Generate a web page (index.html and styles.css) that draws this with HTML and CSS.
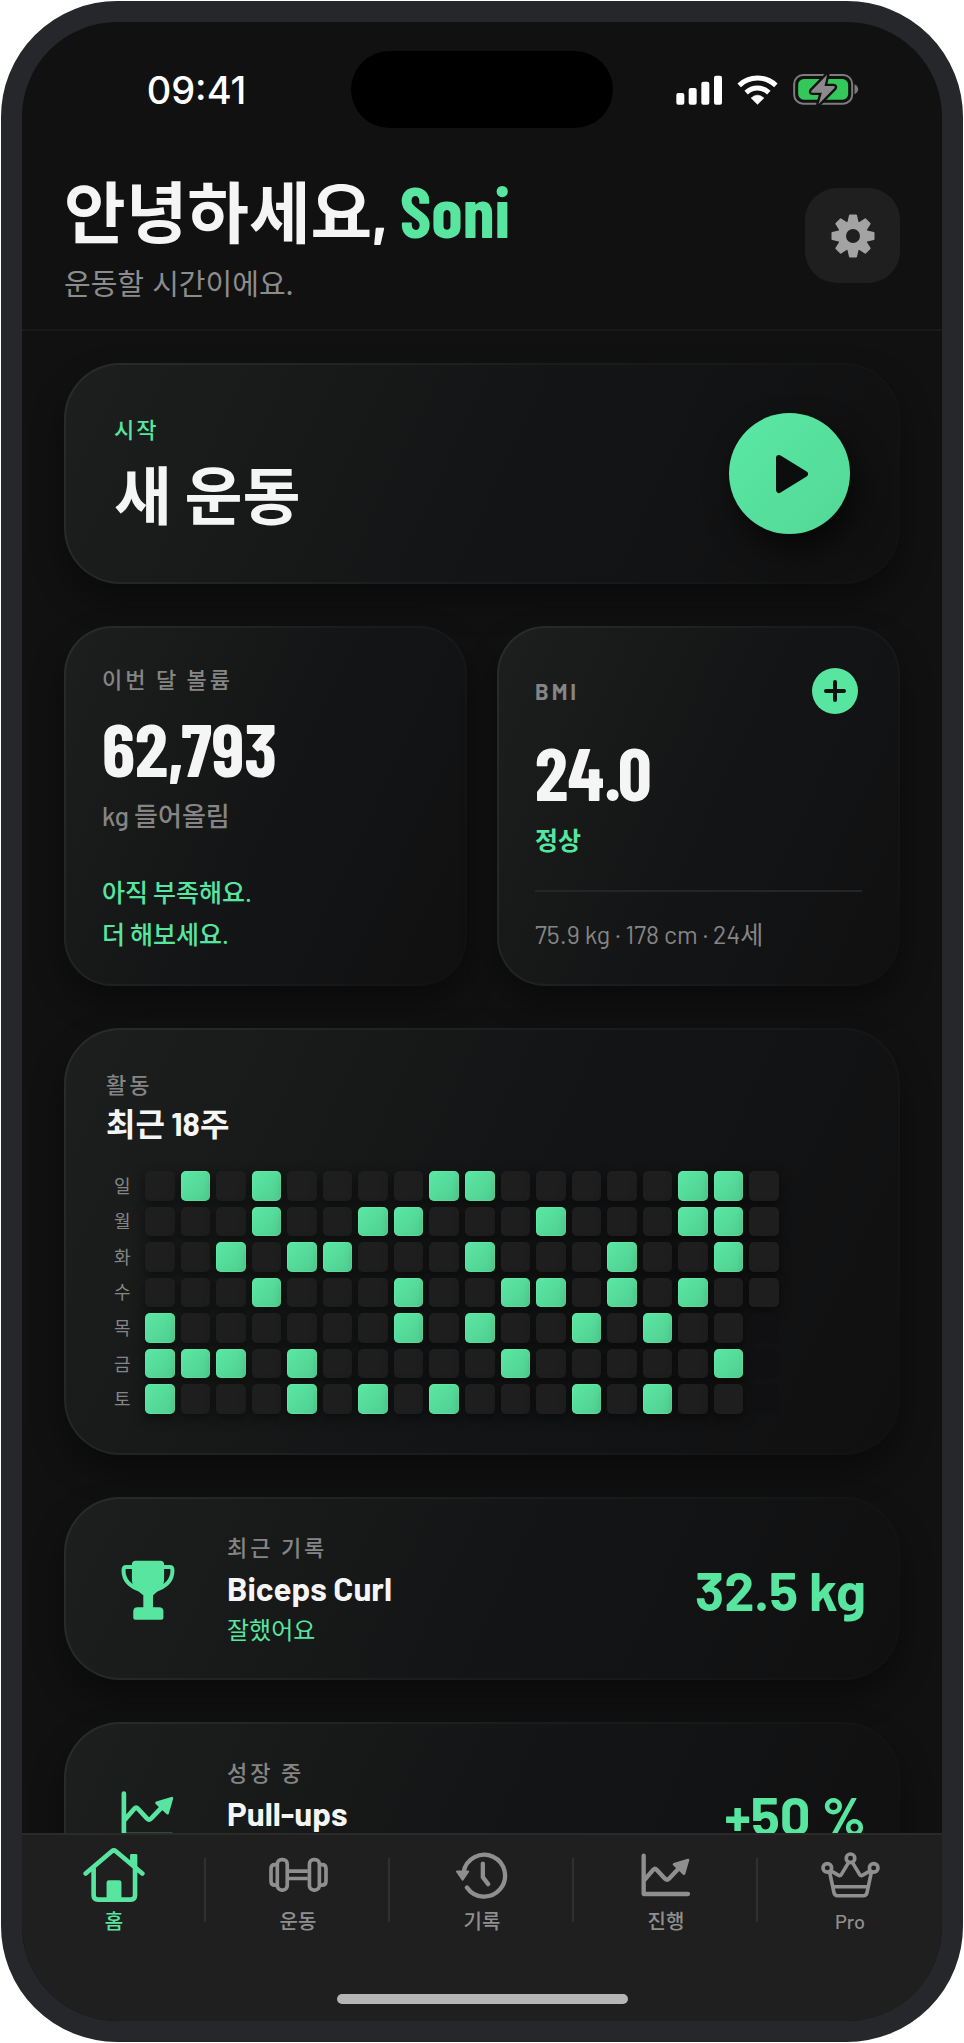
FILE: index.html
```
<!DOCTYPE html>
<html lang="ko">
<head>
    <meta charset="UTF-8">
    <meta name="viewport" content="width=device-width, initial-scale=1.0">
    <title>홈</title>
    <link rel="stylesheet" href="styles.css">
</head>
<body>

    <!-- Shared icons -->
    <svg class="sprite" aria-hidden="true">
        <symbol id="icon-chart" viewBox="0 0 150 130">
            <path d="M8 7V122H141M10 80L37 49Q42 44 47 49L72 76Q78 82 84 76L122 36" fill="none" stroke="currentColor" stroke-width="13" stroke-linecap="round" stroke-linejoin="round"/>
            <path d="M99 33L141 20L129 61Z" fill="currentColor" stroke="currentColor" stroke-width="8" stroke-linejoin="round"/>
        </symbol>
    </svg>

    <div class="device">

        <!-- Status bar -->
        <div class="status-bar">
            <span class="time">09:41</span>
            <div class="island"></div>
            <div class="status-icons">
                <svg width="46" height="30" viewBox="0 0 138 90">
                    <g fill="#fff">
                        <rect x="1" y="54" width="24" height="35" rx="6"/>
                        <rect x="38" y="39" width="24" height="50" rx="6"/>
                        <rect x="76" y="20" width="24" height="69" rx="6"/>
                        <rect x="114" y="2" width="24" height="87" rx="6"/>
                    </g>
                </svg>
                <svg width="41" height="30" viewBox="0 0 122 90">
                    <g fill="none" stroke="#fff" stroke-width="15">
                        <path d="M6 31A80 80 0 0 1 116 31"/>
                        <path d="M27 53A49 49 0 0 1 95 53"/>
                    </g>
                    <path d="M61 88L42 69Q61 52 80 69Z" fill="#fff" stroke="#fff" stroke-width="2" stroke-linejoin="round"/>
                </svg>
                <svg width="66" height="31" viewBox="0 0 197 93">
                    <rect x="3" y="3" width="174" height="86" rx="27" fill="none" stroke="#7c7c7d" stroke-width="6"/>
                    <rect x="15" y="15" width="150" height="62" rx="17" fill="#34c759"/>
                    <path d="M184 31Q195 37 195 46T184 61Z" fill="#7c7c7d"/>
                    <path d="M102 2L55 50Q52 56 58 56H86L76 91L124 42Q127 36 121 36H94Z" fill="#8a8a8b" stroke="#111112" stroke-width="14" stroke-linejoin="round" paint-order="stroke"/>
                </svg>
            </div>
        </div>

        <!-- Greeting -->
        <header class="header">
            <div>
                <h1>안녕하세요, <span class="name">Soni</span></h1>
                <p class="subtitle">운동할 시간이에요.</p>
            </div>
            <button class="settings" aria-label="설정">
                <svg width="44" height="44" viewBox="-22 -22 44 44">
                    <g fill="#a3a3a3" stroke="#a3a3a3" stroke-width="2" stroke-linejoin="round">
                        <circle r="14"/>
                        <path id="tooth" d="M-3-20.5H3L5-12V12L3 20.5H-3L-5 12V-12Z"/>
                        <use href="#tooth" transform="rotate(45)"/>
                        <use href="#tooth" transform="rotate(90)"/>
                        <use href="#tooth" transform="rotate(135)"/>
                    </g>
                    <circle r="7" fill="#1f1f1f"/>
                </svg>
            </button>
        </header>

        <main class="content">

            <section class="card start-card">
                <div>
                    <p class="label accent">시작</p>
                    <h2>새 운동</h2>
                </div>
                <button class="play" aria-label="새 운동 시작">
                    <svg width="36" height="40" viewBox="-2 0 36 40">
                        <path d="M5 4L31 20L5 36Z" fill="#0c0e0d" stroke="#0c0e0d" stroke-width="6" stroke-linejoin="round"/>
                    </svg>
                </button>
            </section>

            <div class="stats">
                <section class="card stat-card">
                    <p class="label">이번 달 볼륨</p>
                    <p class="number">62,793</p>
                    <p class="unit">kg 들어올림</p>
                    <p class="hint">아직 부족해요.<br>더 해보세요.</p>
                </section>
                <section class="card stat-card">
                    <div class="stat-head">
                        <p class="label">BMI</p>
                        <button class="add" aria-label="BMI 추가">
                            <svg width="22" height="22" viewBox="0 0 22 22">
                                <path d="M11 2V20M2 11H20" stroke="#101211" stroke-width="4" stroke-linecap="round"/>
                            </svg>
                        </button>
                    </div>
                    <p class="number">24.0</p>
                    <p class="unit normal">정상</p>
                    <p class="body-info">75.9 kg · 178 cm · 24세</p>
                </section>
            </div>

            <section class="card activity-card">
                <p class="label">활동</p>
                <h3>최근 18주</h3>
                <div class="heatmap" id="heatmap"></div>
            </section>

            <section class="card record-card">
                <div class="record-icon">
                    <svg width="54" height="60" viewBox="0 0 160 179">
                        <path d="M32 13Q32 2 43 2H117Q128 2 128 13V58C128 82 112 90 95 105V141H113Q126 141 126 154V172Q126 178 120 178H42Q36 178 36 172V154Q36 141 49 141H66V105C48 90 32 82 32 58Z" fill="currentColor"/>
                        <path d="M34 21H15Q7 21 7 31C7 60 28 80 60 90M126 21H145Q153 21 153 31C153 60 132 80 100 90" fill="none" stroke="currentColor" stroke-width="12"/>
                    </svg>
                </div>
                <div class="record-text">
                    <p class="label">최근 기록</p>
                    <h3>Biceps Curl</h3>
                    <p class="note">잘했어요</p>
                </div>
                <p class="record-value">32.5 kg</p>
            </section>

            <section class="card record-card">
                <div class="record-icon">
                    <svg width="54" height="47"><use href="#icon-chart"/></svg>
                </div>
                <div class="record-text">
                    <p class="label">성장 중</p>
                    <h3>Pull-ups</h3>
                    <p class="note">&nbsp;</p>
                </div>
                <p class="record-value">+50 %</p>
            </section>

        </main>

        <!-- Bottom navigation -->
        <footer class="bottom">
            <nav class="tabs">
                <a href="#" class="tab active">
                    <svg width="62" height="54" viewBox="0 0 185 163">
                        <path d="M7 77L86 10Q92 5 98 10L178 77M31 62V143Q31 156 44 156H143Q156 156 156 143V62" fill="none" stroke="currentColor" stroke-width="14" stroke-linecap="round"/>
                        <path d="M141 22Q141 18 145 18H159Q163 18 163 22V66L141 48ZM70 156V104Q70 97 77 97H108Q115 97 115 104V156Z" fill="currentColor"/>
                    </svg>
                    <span>홈</span>
                </a>
                <a href="#" class="tab">
                    <svg width="59" height="54" viewBox="0 -29 178 163">
                        <g fill="none" stroke="currentColor" stroke-width="11">
                            <rect x="25" y="6" width="30" height="92" rx="13"/>
                            <rect x="122" y="6" width="30" height="92" rx="13"/>
                            <path d="M22 21H18Q6 21 6 33V71Q6 83 18 83H22M156 21H160Q172 21 172 33V71Q172 83 160 83H156M60 41H117M60 63H117"/>
                        </g>
                    </svg>
                    <span>운동</span>
                </a>
                <a href="#" class="tab">
                    <svg width="54" height="54" viewBox="2 -11 163 163">
                        <path d="M28 62A63 63 0 1 1 38 108M86 36V77L102 98" fill="none" stroke="currentColor" stroke-width="13" stroke-linecap="round" stroke-linejoin="round"/>
                        <path d="M8 60H42L25 85Z" fill="currentColor" stroke="currentColor" stroke-width="6" stroke-linejoin="round"/>
                    </svg>
                    <span>기록</span>
                </a>
                <a href="#" class="tab">
                    <svg width="50" height="54"><use href="#icon-chart"/></svg>
                    <span>진행</span>
                </a>
                <a href="#" class="tab">
                    <svg width="59" height="54" viewBox="0 -12 178 163">
                        <g fill="none" stroke="currentColor" stroke-width="11" stroke-linejoin="round">
                            <circle cx="19" cy="48" r="13"/>
                            <circle cx="89" cy="19" r="13"/>
                            <circle cx="159" cy="48" r="13"/>
                            <path d="M26 61L39 122Q41 132 50 132H128Q137 132 139 122L152 61M30 57L52 70Q58 73 62 67L83 32M148 57L126 70Q120 73 116 67L95 32M37 105H141"/>
                        </g>
                    </svg>
                    <span>Pro</span>
                </a>
            </nav>
            <div class="home-indicator"></div>
        </footer>

    </div>

    <script>
        // 1 = workout, 0 = rest, - = still to come
        const weeks = [
            ["일", "010100001100000110"],
            ["월", "000100110001000110"],
            ["화", "001011000100010010"],
            ["수", "000100010011010100"],
            ["목", "10000001010010100-"],
            ["금", "11101000001000001-"],
            ["토", "10001010100010100-"]
        ];
        const types = { "1": "on", "0": "off", "-": "future" };

        document.getElementById("heatmap").innerHTML = weeks.map(([day, cells]) =>
            `<span class="day">${day}</span>` +
            [...cells].map(c => `<span class="cell ${types[c]}"></span>`).join("")
        ).join("");
    </script>

</body>
</html>
```
FILE: styles.css
```
:root {
    --green: #57e5a0;
    --grey: #858585;
    --screen: #111112;
    --condensed: "Barlow Condensed", Roboto, "Noto Sans CJK KR", sans-serif;
}

* {
    box-sizing: border-box;
}

body {
    margin: 0;
    padding: 1px;
    background: #fff;
    color: #f5f5f5;
    font-family: Barlow, Roboto, "Noto Sans CJK KR", sans-serif;
}

h1, h2, h3, p {
    margin: 0;
}

button {
    border: none;
    padding: 0;
    display: flex;
    align-items: center;
    justify-content: center;
    flex-shrink: 0;
    cursor: pointer;
}

.sprite {
    position: absolute;
    width: 0;
    height: 0;
}

/* Phone frame */
.device {
    display: flex;
    flex-direction: column;
    height: calc(100vh - 2px);
    border: 21px solid #26272a;
    border-radius: 116px;
    background: var(--screen);
    overflow: hidden;
}

/* Status bar */
.status-bar {
    display: grid;
    grid-template-columns: 1fr 262px 1fr;
    align-items: center;
    justify-items: center;
    padding: 29px 20px 0;
}

.time {
    font-family: Inter, sans-serif;
    font-size: 38px;
    font-weight: 500;
    color: #fff;
}

.island {
    width: 262px;
    height: 77px;
    border-radius: 39px;
    background: #000;
}

.status-icons {
    display: flex;
    align-items: center;
    gap: 15px;
}

/* Header */
.header {
    display: flex;
    justify-content: space-between;
    align-items: center;
    padding: 43px 42px 29px;
    border-bottom: 2px solid #19191a;
}

.header h1 {
    font-family: var(--condensed);
    font-size: 67px;
    font-weight: 700;
    line-height: 80px;
}

.name {
    font-size: 71px;
    line-height: 1;
    color: var(--green);
}

.subtitle {
    margin-top: 13px;
    font-family: "Noto Sans CJK KR", sans-serif;
    font-size: 29px;
    font-weight: 400;
    line-height: 36px;
    color: #8c8c8c;
}

.settings {
    width: 95px;
    height: 95px;
    border-radius: 32px;
    background: #1f1f1f;
}

/* Scrolling area */
.content {
    flex: 1;
    min-height: 0;
    display: flex;
    flex-direction: column;
    gap: 42px;
    padding: 32px 42px;
    overflow: hidden auto;
    scrollbar-width: none;
}

.card {
    flex-shrink: 0;
    border: 2px solid transparent;
    border-radius: 56px;
    background:
        linear-gradient(115deg, #1c1f1d, #141516 50%, #101011) padding-box,
        linear-gradient(115deg, #2a2c2b, #1b1d1d 50%, #111112) border-box;
    box-shadow: 0 16px 32px rgba(0, 0, 0, 0.4);
}

.label {
    font-size: 22px;
    font-weight: 500;
    line-height: 30px;
    letter-spacing: 3px;
    color: var(--grey);
}

.accent {
    letter-spacing: 2px;
    color: var(--green);
}

/* New workout */
.start-card {
    display: flex;
    justify-content: space-between;
    align-items: center;
    padding: 48px;
}

.start-card h2 {
    margin-top: 10px;
    font-size: 63px;
    font-weight: 700;
    line-height: 80px;
}

.play {
    width: 121px;
    height: 121px;
    border-radius: 50%;
    background: linear-gradient(135deg, #5ae8a4, #53d896);
    box-shadow: 8px 16px 30px rgba(0, 0, 0, 0.6);
}

/* Volume and BMI */
.stats {
    flex-shrink: 0;
    display: grid;
    grid-template-columns: 1fr 1fr;
    gap: 30px;
}

.stat-card {
    display: flex;
    flex-direction: column;
    padding: 36px 36px 29px;
    border-radius: 48px;
}

.stat-head {
    display: flex;
    justify-content: space-between;
    align-items: center;
    height: 54px;
    padding-right: 4px;
}

.stat-head .label {
    font-weight: 700;
}

.add {
    width: 46px;
    height: 46px;
    border-radius: 50%;
    background: var(--green);
}

.number {
    margin-top: 17px;
    font-family: var(--condensed);
    font-size: 75px;
    font-weight: 700;
    line-height: 72px;
}

.unit {
    margin-top: 16px;
    margin-bottom: 38px;
    font-size: 26px;
    font-weight: 500;
    line-height: 34px;
    color: var(--grey);
}

.unit.normal {
    margin-bottom: 33px;
    font-size: 25px;
    font-weight: 700;
    color: var(--green);
}

.hint {
    margin-top: auto;
    font-size: 25px;
    font-weight: 500;
    line-height: 42px;
    color: var(--green);
}

.body-info {
    margin-top: auto;
    padding-top: 21px;
    border-top: 2px solid #242526;
    font-size: 25px;
    font-weight: 400;
    line-height: 42px;
    color: var(--grey);
}

/* Activity */
.activity-card {
    padding: 39px 40px;
}

.activity-card h3 {
    margin-top: 4px;
    font-size: 32px;
    font-weight: 700;
    line-height: 40px;
}

.heatmap {
    display: grid;
    grid-template-columns: 33px repeat(18, 1fr);
    align-items: center;
    gap: 6px;
    margin-top: 28px;
    padding-right: 79px;
}

.day {
    padding-left: 8px;
    font-size: 18px;
    line-height: 24px;
    color: var(--grey);
}

.cell {
    aspect-ratio: 1;
    border-radius: 5px;
}

.cell.on {
    background: linear-gradient(135deg, #5ae8a4, #50cd90);
    box-shadow: inset 0 0 0 1px rgba(120, 240, 180, 0.3), 0 4px 12px rgba(0, 0, 0, 0.5);
}

.cell.off {
    background: #1e1e1e;
    box-shadow: 0 4px 12px rgba(0, 0, 0, 0.5);
}

.cell.future {
    background: #101012;
}

/* Records */
.record-card {
    display: grid;
    grid-template-columns: 84px 1fr auto;
    align-items: center;
    column-gap: 37px;
    padding: 33px 32px 30px 40px;
}

.record-icon {
    display: flex;
    justify-content: center;
    color: var(--green);
}

.record-text h3 {
    margin-top: 5px;
    font-size: 33px;
    font-weight: 700;
    line-height: 42px;
}

.note {
    margin-top: 3px;
    font-size: 24px;
    line-height: 36px;
    color: var(--green);
}

.record-value {
    font-size: 54px;
    font-weight: 700;
    line-height: 60px;
    color: var(--green);
}

/* Bottom navigation */
.bottom {
    flex-shrink: 0;
    padding-bottom: 17px;
    border-top: 2px solid #2a2a29;
    background: #1f1f1f;
}

.tabs {
    display: grid;
    grid-template-columns: repeat(5, 1fr);
    padding-top: 13px;
}

.tab {
    display: flex;
    flex-direction: column;
    align-items: center;
    gap: 5px;
    font-size: 20px;
    font-weight: 500;
    line-height: 28px;
    color: #8f8f8f;
    text-decoration: none;
    background: linear-gradient(#303031, #303031) no-repeat right 10px / 2px 64px;
}

.tab:last-child {
    background: none;
}

.tab.active {
    color: var(--green);
}

.home-indicator {
    width: 291px;
    height: 10px;
    margin: 59px auto 0;
    border-radius: 5px;
    background: #b5b5b5;
}
```
